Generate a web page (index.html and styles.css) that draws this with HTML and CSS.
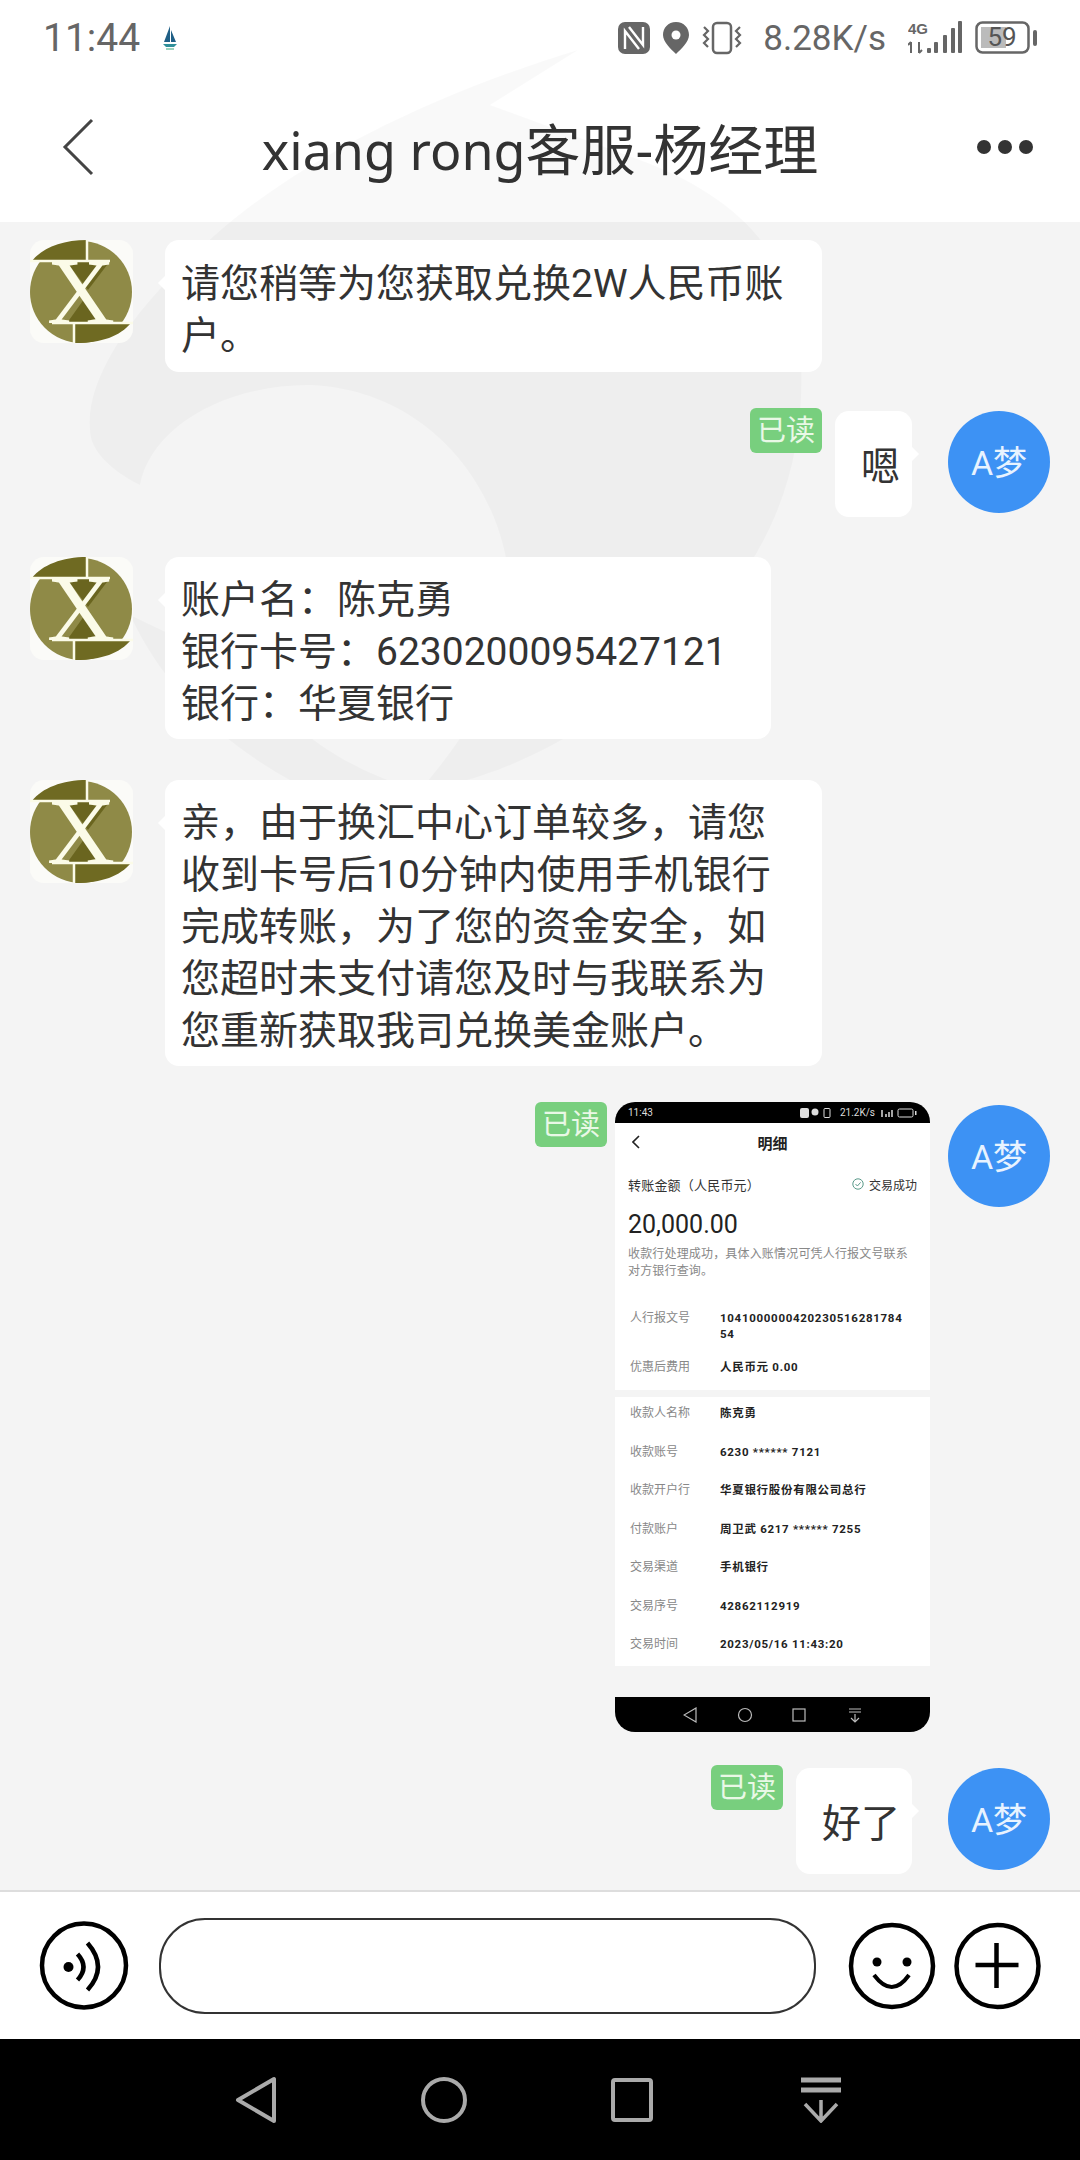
FILE: index.html
```html
<!DOCTYPE html>
<html lang="zh-CN">
<head>
    <meta charset="UTF-8">
    <meta name="viewport" content="width=device-width, initial-scale=1.0">
    <title>xiang rong客服-杨经理</title>
    <link rel="stylesheet" href="styles.css">
</head>
<body>

<div class="page">
    <div class="top">
        <div class="status">
            <div class="status-left">
                <span class="clock">11:44</span>
                <svg class="boat" width="18" height="26" viewBox="0 0 18 26">
                    <path d="M9 1 L9 17 L3 17 Z M10 5 L15 17 L10 17 Z" fill="#1f5f86"/>
                    <path d="M2 19 L16 19 L13 22 L5 22 Z" fill="#2f8f9a"/>
                    <path d="M5 24 L13 24" stroke="#7cc5a8" stroke-width="1.5"/>
                </svg>
            </div>
            <div class="status-right">
                <svg width="32" height="32" viewBox="0 0 32 32">
                    <rect width="32" height="32" rx="7" fill="#666"/>
                    <path d="M7 27 L7 9 L21 27 M11 5 L25 23 L25 5" stroke="#fff" stroke-width="2.4" fill="none"/>
                </svg>
                <svg width="26" height="32" viewBox="0 0 26 32">
                    <path d="M13 0 C5 0 0 6 0 13 C0 20 8 27 13 32 C18 27 26 20 26 13 C26 6 21 0 13 0 Z" fill="#666"/>
                    <circle cx="13" cy="13" r="4.5" fill="#fff"/>
                </svg>
                <svg width="40" height="34" viewBox="0 0 40 34">
                    <rect x="11" y="2" width="18" height="30" rx="4" fill="none" stroke="#666" stroke-width="2.5"/>
                    <path d="M2 6 L6 10 L2 14 L6 18 L2 22 L6 26 M38 6 L34 10 L38 14 L34 18 L38 22 L34 26" fill="none" stroke="#666" stroke-width="2.2"/>
                </svg>
                <span class="speed">8.28K/s</span>
                <svg class="signal" width="54" height="34" viewBox="0 0 54 34">
                    <text x="0" y="13" class="signal-text">4G</text>
                    <path d="M3 21 L3 32 M0 24 L3 21 M11 32 L11 21 M11 32 L14 29" stroke="#666" stroke-width="2" fill="none"/>
                    <rect x="19" y="27" width="4" height="5" rx="1" fill="#666"/>
                    <rect x="26" y="21" width="4" height="11" rx="1" fill="#666"/>
                    <rect x="35" y="14" width="4" height="18" rx="1" fill="#666"/>
                    <rect x="43" y="7" width="4" height="25" rx="1" fill="#666"/>
                    <rect x="50" y="0" width="4" height="32" rx="1" fill="#666"/>
                </svg>
                <svg width="62" height="34" viewBox="0 0 62 34">
                    <rect x="1.5" y="1.5" width="52" height="30" rx="6" fill="none" stroke="#666" stroke-width="2.5"/>
                    <rect x="6" y="6" width="25" height="21" fill="#bbb"/>
                    <text x="27" y="25" text-anchor="middle" class="battery-text">59</text>
                    <rect x="58" y="9" width="4" height="16" rx="2" fill="#666"/>
                </svg>
            </div>
        </div>
        <div class="header">
            <svg class="header-back" width="32" height="58" viewBox="0 0 32 58">
                <path d="M30 2 L3 29 L30 56" fill="none" stroke="#444" stroke-width="3"/>
            </svg>
            <h1 class="header-title">xiang rong<span class="header-title-cn">客服-杨经理</span></h1>
            <div class="header-more"><i></i><i></i><i></i></div>
        </div>
    </div>

    <svg class="watermark" width="1080" height="900" viewBox="0 0 1080 900">
        <path d="M578 50 L490 105 L640 160 C720 190 790 240 800 340 C810 470 770 560 680 650 C600 730 500 780 420 790 C480 720 512 660 510 590 C505 490 430 390 310 385 C220 385 150 430 140 485 C110 470 90 450 90 430 C85 380 130 310 215 235 C300 160 430 95 578 50 Z"/>
        <path d="M130 615 C170 700 240 760 330 800 L420 790 C340 770 280 720 245 670 Z"/>
    </svg>

    <div class="chat">
        <div class="row">
            <svg class="avatar" viewBox="0 0 103 103">
                <rect width="103" height="103" rx="14" fill="#fbfbf8"/>
                <circle cx="51" cy="52" r="51" fill="#8f8a47"/>
                <path d="M2 21 C12 8 32 0 57 0 L57 21 Z" fill="#6f6a22"/>
                <path d="M36 21 L80 21 L58 50 Z" fill="#6a651f"/>
                <path d="M101 83 C90 96 72 103 45 103 L45 83 Z" fill="#6f6a22"/>
                <path d="M37 83 L74 83 L57 55 Z" fill="#6a651f"/>
                <path d="M0 21 L80 21 M22 83 L103 83 M57 0 L57 21 M44 83 L44 103" stroke="#fbfbe8" stroke-width="2.5" fill="none"/>
                <text x="51" y="83" text-anchor="middle" class="logo-x">X</text>
            </svg>
            <div class="bubble bubble-left bubble-first">请您稍等为您获取兑换2W人民币账户。</div>
        </div>

        <div class="row row-mine">
            <span class="read">已读</span>
            <div class="bubble bubble-right">嗯</div>
            <div class="avatar-me">A梦</div>
        </div>

        <div class="row row-them">
            <svg class="avatar" viewBox="0 0 103 103">
                <rect width="103" height="103" rx="14" fill="#fbfbf8"/>
                <circle cx="51" cy="52" r="51" fill="#8f8a47"/>
                <path d="M2 21 C12 8 32 0 57 0 L57 21 Z" fill="#6f6a22"/>
                <path d="M36 21 L80 21 L58 50 Z" fill="#6a651f"/>
                <path d="M101 83 C90 96 72 103 45 103 L45 83 Z" fill="#6f6a22"/>
                <path d="M37 83 L74 83 L57 55 Z" fill="#6a651f"/>
                <path d="M0 21 L80 21 M22 83 L103 83 M57 0 L57 21 M44 83 L44 103" stroke="#fbfbe8" stroke-width="2.5" fill="none"/>
                <text x="51" y="83" text-anchor="middle" class="logo-x">X</text>
            </svg>
            <div class="bubble bubble-left bubble-account">账户名：陈克勇<br>银行卡号：6230200095427121<br>银行：华夏银行</div>
        </div>

        <div class="row row-them row-notice">
            <svg class="avatar" viewBox="0 0 103 103">
                <rect width="103" height="103" rx="14" fill="#fbfbf8"/>
                <circle cx="51" cy="52" r="51" fill="#8f8a47"/>
                <path d="M2 21 C12 8 32 0 57 0 L57 21 Z" fill="#6f6a22"/>
                <path d="M36 21 L80 21 L58 50 Z" fill="#6a651f"/>
                <path d="M101 83 C90 96 72 103 45 103 L45 83 Z" fill="#6f6a22"/>
                <path d="M37 83 L74 83 L57 55 Z" fill="#6a651f"/>
                <path d="M0 21 L80 21 M22 83 L103 83 M57 0 L57 21 M44 83 L44 103" stroke="#fbfbe8" stroke-width="2.5" fill="none"/>
                <text x="51" y="83" text-anchor="middle" class="logo-x">X</text>
            </svg>
            <div class="bubble bubble-left">亲，由于换汇中心订单较多，请您收到卡号后10分钟内使用手机银行完成转账，为了您的资金安全，如您超时未支付请您及时与我联系为您重新获取我司兑换美金账户。</div>
        </div>

        <div class="row row-mine">
            <span class="read read-shot">已读</span>
            <div class="shot">
                <div class="shot-status">
                    <span>11:43</span>
                    <span class="shot-status-right">
                        <svg width="34" height="10" viewBox="0 0 34 10">
                            <rect x="0" y="0" width="9" height="10" rx="2" fill="#ddd"/>
                            <circle cx="15" cy="4" r="3.5" fill="#ddd"/>
                            <rect x="24" y="0.5" width="6" height="9" rx="1" fill="none" stroke="#ddd"/>
                        </svg>
                        <span>21.2K/s</span>
                        <svg width="36" height="10" viewBox="0 0 36 10">
                            <path d="M1 9 L1 2 M5 9 L5 6 M8 9 L8 4 M11 9 L11 2" stroke="#ddd" stroke-width="1.5"/>
                            <rect x="17" y="1" width="15" height="8" rx="1.5" fill="none" stroke="#ddd"/>
                            <rect x="34" y="3" width="1.5" height="4" fill="#ddd"/>
                        </svg>
                    </span>
                </div>
                <div class="shot-card">
                    <div class="shot-nav">
                        <svg class="shot-back" width="8" height="14" viewBox="0 0 8 14">
                            <path d="M7 1 L1 7 L7 13" fill="none" stroke="#222" stroke-width="1.6"/>
                        </svg>
                        <span>明细</span>
                    </div>
                    <div class="shot-amount-head">
                        <span>转账金额（人民币元）</span>
                        <span class="shot-ok">
                            <svg width="12" height="12" viewBox="0 0 12 12">
                                <circle cx="6" cy="6" r="5.2" fill="none" stroke="#5a9a8a"/>
                                <path d="M3.5 6 L5.4 8 L8.6 4.4" fill="none" stroke="#5a9a8a"/>
                            </svg>
                            交易成功
                        </span>
                    </div>
                    <div class="shot-amount">20,000.00</div>
                    <div class="shot-desc">收款行处理成功，具体入账情况可凭人行报文号联系<br>对方银行查询。</div>
                    <div class="shot-row shot-row-first"><span class="shot-label">人行报文号</span><span class="shot-value">1041000000420230516281784<br>54</span></div>
                    <div class="shot-row shot-row-fee"><span class="shot-label">优惠后费用</span><span class="shot-value">人民币元 0.00</span></div>
                </div>
                <div class="shot-card shot-list">
                    <div class="shot-row"><span class="shot-label">收款人名称</span><span class="shot-value">陈克勇</span></div>
                    <div class="shot-row"><span class="shot-label">收款账号</span><span class="shot-value">6230 ****** 7121</span></div>
                    <div class="shot-row"><span class="shot-label">收款开户行</span><span class="shot-value">华夏银行股份有限公司总行</span></div>
                    <div class="shot-row"><span class="shot-label">付款账户</span><span class="shot-value">周卫武 6217 ****** 7255</span></div>
                    <div class="shot-row"><span class="shot-label">交易渠道</span><span class="shot-value">手机银行</span></div>
                    <div class="shot-row"><span class="shot-label">交易序号</span><span class="shot-value">42862112919</span></div>
                    <div class="shot-row"><span class="shot-label">交易时间</span><span class="shot-value">2023/05/16 11:43:20</span></div>
                </div>
                <div class="shot-bottom">
                    <svg width="180" height="16" viewBox="0 0 180 16">
                        <path d="M13 1 L13 15 L1 8 Z" fill="none" stroke="#bbb" stroke-width="1.2"/>
                        <circle cx="62" cy="8" r="6.5" fill="none" stroke="#bbb" stroke-width="1.2"/>
                        <rect x="110" y="2" width="12" height="12" fill="none" stroke="#bbb" stroke-width="1.2"/>
                        <path d="M166 2 L178 2 M166 5 L178 5 M172 7 L172 15 M168 11 L172 15 L176 11" fill="none" stroke="#bbb" stroke-width="1.2"/>
                    </svg>
                </div>
            </div>
            <div class="avatar-me avatar-shot">A梦</div>
        </div>

        <div class="row row-mine row-last">
            <span class="read">已读</span>
            <div class="bubble bubble-right">好了</div>
            <div class="avatar-me">A梦</div>
        </div>
    </div>

    <div class="input-bar">
        <svg class="btn-voice" width="90" height="89" viewBox="0 0 89 89">
            <circle cx="44.5" cy="44.5" r="42" fill="none" stroke="#000" stroke-width="4.5"/>
            <circle cx="29" cy="46" r="5" fill="#000"/>
            <path d="M38 33 Q50 46 38 59" fill="none" stroke="#000" stroke-width="4.5"/>
            <path d="M48 22 Q69 46 48 69" fill="none" stroke="#000" stroke-width="4.5"/>
        </svg>
        <div class="input-box"></div>
        <svg class="btn-smile" width="88" height="88" viewBox="0 0 86 88">
            <circle cx="43" cy="44" r="41" fill="none" stroke="#000" stroke-width="4.5"/>
            <circle cx="28" cy="40" r="4.5" fill="#000"/>
            <circle cx="58" cy="40" r="4.5" fill="#000"/>
            <path d="M25 53 Q43 77 60 53" fill="none" stroke="#000" stroke-width="4"/>
        </svg>
        <svg class="btn-plus" width="87" height="88" viewBox="0 0 86 88">
            <circle cx="43" cy="44" r="41" fill="none" stroke="#000" stroke-width="4.5"/>
            <path d="M21 43 L64 43 M42 21 L42 66" fill="none" stroke="#000" stroke-width="4.5"/>
        </svg>
    </div>

    <div class="nav">
        <svg width="42" height="48" viewBox="0 0 42 48">
            <path d="M39 3 L39 45 L3 24 Z" fill="none" stroke="#aaa" stroke-width="4" stroke-linejoin="round"/>
        </svg>
        <svg width="46" height="48" viewBox="0 0 46 48">
            <circle cx="23" cy="24" r="21" fill="none" stroke="#aaa" stroke-width="4"/>
        </svg>
        <svg width="42" height="44" viewBox="0 0 42 44">
            <rect x="2" y="2" width="38" height="40" rx="2" fill="none" stroke="#aaa" stroke-width="4"/>
        </svg>
        <svg class="nav-down" width="40" height="46" viewBox="0 0 40 46">
            <path d="M0 3 L40 3 M0 13 L40 13" stroke="#aaa" stroke-width="5"/>
            <path d="M20 23 L20 44 M4 27 L20 44 L36 27" fill="none" stroke="#aaa" stroke-width="3.5"/>
        </svg>
    </div>
</div>

</body>
</html>
```

FILE: styles.css
```css
* {
    box-sizing: border-box;
}

body {
    margin: 0;
    padding: 0;
    font-family: Roboto, "Noto Sans CJK SC", sans-serif;
    color: #333;
}

.logo-x {
    font-family: "Liberation Serif", serif;
    font-size: 94px;
    fill: #fbfbe8;
}

.page {
    position: relative;
    width: 1080px;
    height: 2160px;
    overflow: hidden;
    display: flex;
    flex-direction: column;
    background-color: #fff;
}

/* status bar + title */
.top {
    height: 222px;
    background-color: #fff;
}

.status {
    position: relative;
    height: 76px;
    padding: 0 43px;
    display: flex;
    align-items: center;
    justify-content: space-between;
    color: #666;
}

.status-left {
    display: flex;
    align-items: center;
    gap: 21px;
}

.clock {
    font-size: 39px;
}

.status-right {
    display: flex;
    align-items: center;
    gap: 13px;
}

.speed {
    font-size: 35px;
    margin: 0 9px 0 8px;
}

.signal-text {
    font-family: "Liberation Sans", sans-serif;
    font-size: 15px;
    font-weight: bold;
    fill: #666;
}

.battery-text {
    font-size: 26px;
    fill: #555;
}

.header {
    position: relative;
    height: 146px;
    display: flex;
    align-items: center;
    justify-content: center;
}

.header-back {
    position: absolute;
    left: 62px;
    top: 42px;
}

.header-title {
    margin: 0;
    font-family: "Noto Sans", "Noto Sans CJK SC", sans-serif;
    font-size: 52px;
    font-weight: 400;
    line-height: 70px;
    color: #333;
}

.header-title-cn {
    font-size: 55px;
}

.header-more {
    position: absolute;
    left: 977px;
    top: 64px;
    display: flex;
    gap: 7px;
}

.header-more i {
    width: 14px;
    height: 14px;
    border-radius: 50%;
    background-color: #333;
}

.watermark {
    position: absolute;
    left: 0;
    top: 0;
}

.watermark path {
    fill: rgba(0, 0, 0, 0.025);
}

/* messages */
.chat {
    flex: 1;
    padding: 18px 30px 0;
    background-color: #f4f4f4;
    border-bottom: 2px solid #ddd;
}

.row {
    position: relative;
    display: flex;
    align-items: flex-start;
}

.row-them {
    margin-top: 40px;
}

.row-notice {
    margin-top: 41px;
}

.row-mine {
    margin-top: 36px;
    justify-content: flex-end;
}

.row-last {
    margin-top: 33px;
}

.avatar {
    flex: none;
    width: 103px;
    height: 103px;
    margin-right: 32px;
}

.bubble {
    position: relative;
    max-width: 657px;
    padding: 17px 18px 9px 16px;
    font-size: 39px;
    line-height: 52px;
    color: #333;
    background-color: #fff;
    border-radius: 14px;
}

.bubble-left::after,
.bubble-right::after {
    content: "";
    position: absolute;
    top: 36px;
    border: 7px solid transparent;
}

.bubble-left::after {
    left: -14px;
    border-right-color: #fff;
}

.bubble-right::after {
    right: -14px;
    border-left-color: #fff;
}

.bubble-first {
    padding-top: 18px;
    padding-bottom: 10px;
}

.bubble-account {
    padding-right: 44px;
}

.bubble-right {
    margin: 3px 36px 0 13px;
    padding: 30px 12px 24px 26px;
}

.read {
    flex: none;
    width: 72px;
    height: 45px;
    font-size: 29px;
    line-height: 47px;
    text-align: center;
    color: #e9f8e6;
    background-color: #78cf7e;
    border-radius: 6px;
}

.read-shot {
    margin-right: 8px;
}

.avatar-me {
    flex: none;
    width: 102px;
    height: 102px;
    margin-top: 3px;
    font-size: 34px;
    line-height: 104px;
    text-align: center;
    color: #e8f3ff;
    background-color: #3d92f4;
    border-radius: 50%;
}

.avatar-shot {
    margin-left: 18px;
}

/* the transfer screenshot */
.shot {
    flex: none;
    width: 315px;
    height: 630px;
    font-size: 12px;
    color: #222;
}

.shot-status {
    height: 21px;
    padding: 0 13px;
    display: flex;
    align-items: center;
    justify-content: space-between;
    font-size: 10px;
    color: #ddd;
    background-color: #000;
    border-radius: 20px 20px 0 0;
}

.shot-status-right {
    display: flex;
    align-items: center;
    gap: 6px;
}

.shot-card {
    padding: 0 13px 15px;
    background-color: #fff;
}

.shot-nav {
    position: relative;
    height: 38px;
    display: flex;
    align-items: center;
    justify-content: center;
    font-size: 15px;
    font-weight: 700;
}

.shot-back {
    position: absolute;
    left: 4px;
    top: 12px;
}

.shot-amount-head {
    margin-top: 13px;
    height: 20px;
    display: flex;
    align-items: center;
    justify-content: space-between;
    font-size: 13px;
    letter-spacing: 0.2px;
    color: #333;
}

.shot-ok {
    display: flex;
    align-items: center;
    gap: 5px;
    font-size: 12px;
    letter-spacing: 0;
}

.shot-amount {
    margin-top: 13px;
    font-size: 25px;
    line-height: 36px;
    color: #222;
}

.shot-desc {
    margin-top: 3px;
    font-size: 12px;
    letter-spacing: 0.17px;
    line-height: 17px;
    color: #888;
    white-space: nowrap;
}

.shot-row {
    display: flex;
    line-height: 16px;
    font-size: 12px;
}

.shot-row-first {
    margin-top: 30px;
}

.shot-row-fee {
    margin-top: 17px;
}

.shot-label {
    flex: none;
    width: 92px;
    padding-left: 2px;
    color: #888;
}

.shot-value {
    font-size: 11.5px;
    font-weight: 700;
    letter-spacing: 0.7px;
    color: #222;
    white-space: nowrap;
}

.shot-list {
    margin-top: 7px;
    height: 269px;
    padding: 8px 13px 14px;
    display: flex;
    flex-direction: column;
    gap: 22.5px;
}

.shot-bottom {
    margin-top: 31px;
    height: 35px;
    padding-left: 68px;
    display: flex;
    align-items: center;
    background-color: #000;
    border-radius: 0 0 20px 20px;
}

/* input */
.input-bar {
    height: 147px;
    padding-left: 39px;
    display: flex;
    align-items: center;
    background-color: #fff;
}

.input-box {
    width: 657px;
    height: 96px;
    margin-left: 30px;
    border: 2px solid #333;
    border-radius: 46px;
}

.btn-smile {
    margin-left: 32px;
}

.btn-plus {
    margin-left: 18px;
}

/* system buttons */
.nav {
    height: 121px;
    padding-left: 235px;
    display: flex;
    align-items: center;
    gap: 144px;
    background-color: #000;
}

.nav-down {
    margin-left: 4px;
}
```
